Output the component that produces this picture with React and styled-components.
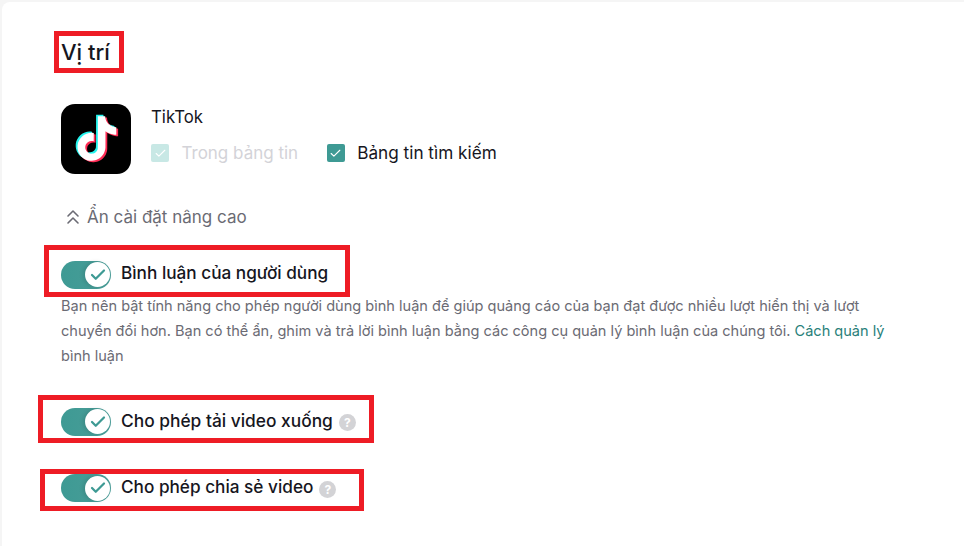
import React from 'react';
import styled, { createGlobalStyle } from 'styled-components';
import { Check, ChevronsUp } from 'lucide-react';

const Global = createGlobalStyle`
  html, body {
    margin: 0;
    background: #f5f5f5;
  }
  body {
    font-family: Inter, "Noto Sans", sans-serif;
    color: #16161e;
  }
`;

const Page = styled.div`
  width: 964px;
  height: 546px;
  box-sizing: border-box;
  padding: 2px 0 0 2px;
  overflow: hidden;
`;
const Card = styled.div`
  height: 544px;
  box-sizing: border-box;
  background: #fff;
  border-radius: 8px 0 0 0;
  padding-top: 29px;
`;
const Marked = styled.div`
  display: flex;
  align-items: center;
  box-sizing: border-box;
  border: 5px solid #ee1c25;
  margin: ${p => p.$top || 0}px 0 0 ${p => p.$left}px;
  width: ${p => p.$width}px;
  height: ${p => p.$height}px;
  padding-left: ${p => 54 - p.$left}px;
  padding-top: ${p => p.$shift || 0}px;
  padding-bottom: ${p => p.$lift || 0}px;
`;
const Title = styled.h2`
  margin: 0;
  font-size: 22px;
  font-weight: 500;
  line-height: 28px;
`;
const Platform = styled.div`
  display: flex;
  margin: 31px 0 0 59px;
`;
const Logo = styled.svg`
  display: block;
  width: 70px;
  height: 70px;
`;
const PlatformBody = styled.div`
  margin-left: 20px;
`;
const PlatformName = styled.div`
  font-size: 16.8px;
  line-height: 24px;
  margin-top: 1px;
`;
const Options = styled.div`
  display: flex;
  margin-top: 12px;
  gap: 28.5px;
`;
const Option = styled.label`
  display: flex;
  align-items: center;
  gap: 12.5px;
  font-size: 17.2px;
  line-height: 24px;
  color: ${p => (p.$disabled ? '#d3d3d8' : '#16161e')};
`;
const DisabledText = styled.span`
  font-size: 17px;
`;
const Box = styled.span`
  display: flex;
  align-items: center;
  justify-content: center;
  width: 18px;
  height: 18px;
  border-radius: 2px;
  background: ${p => (p.$disabled ? '#c8e8e5' : '#3e9a94')};
  color: #fff;
`;
const Advanced = styled.div`
  display: flex;
  align-items: center;
  gap: 2px;
  margin: 31px 0 0 59px;
  font-size: 17px;
  line-height: 24px;
  color: #6b6b74;
`;
const Switch = styled.span`
  display: flex;
  flex: none;
  justify-content: flex-end;
  align-items: center;
  width: 50px;
  height: 28px;
  padding-right: 1px;
  box-sizing: border-box;
  border-radius: 14px;
  background: linear-gradient(90deg, #3e9a94, #4a9d98);
`;
const Knob = styled.span`
  display: flex;
  align-items: center;
  justify-content: center;
  width: 25px;
  height: 25px;
  border-radius: 50%;
  background: #fff;
  box-shadow: -2px 0 4px rgba(0, 0, 0, 0.12);
  color: #3e9a94;
`;
const Label = styled.span`
  margin: 0 0 ${p => p.$rise || 2}px 10px;
  font-size: ${p => p.$size || 17.2}px;
  font-weight: 500;
  line-height: 24px;
`;
const Help = styled.span`
  display: flex;
  align-items: center;
  justify-content: center;
  width: 17px;
  height: 17px;
  margin: 2px 0 0 6px;
  border-radius: 50%;
  background: #d3d3d6;
  color: #fff;
  font-size: 12px;
  font-weight: 700;
`;
const Note = styled.p`
  width: 830px;
  margin: -3px 0 0 59px;
  font-size: 14.55px;
  line-height: 25px;
  color: #6b6b74;
`;
const NoteLink = styled.a`
  color: #2a7f7a;
`;

const notePath = 'M12.525.02c1.31-.02 2.61-.01 3.91-.02.08 1.53.63 3.09 1.75 4.17 1.12 1.11 2.7 1.62 4.24 1.79v4.03c-1.44-.05-2.89-.35-4.2-.97-.57-.26-1.1-.59-1.62-.93-.01 2.92.01 5.84-.02 8.75-.08 1.4-.54 2.79-1.35 3.94-1.31 1.92-3.58 3.17-5.91 3.21-1.43.08-2.86-.31-4.08-1.03-2.02-1.19-3.44-3.37-3.65-5.71-.02-.5-.03-1-.01-1.49.18-1.9 1.12-3.72 2.58-4.96 1.66-1.44 3.98-2.13 6.15-1.72.02 1.48-.04 2.96-.04 4.44-.99-.32-2.15-.23-3.02.37-.63.41-1.11 1.04-1.36 1.75-.21.51-.15 1.07-.14 1.61.24 1.64 1.82 3.02 3.5 2.87 1.12-.01 2.19-.66 2.77-1.61.19-.33.4-.67.41-1.06.1-1.79.06-3.57.07-5.36.01-4.03-.01-8.05.02-12.07z';

function TikTokLogo() {
  return (
    <Logo viewBox="0 0 70 70">
      <rect width="70" height="70" rx="14" fill="#000" />
      <path d={notePath} fill="#25f4ee" transform="translate(11.8 10.8) scale(1.86)" />
      <path d={notePath} fill="#fe2c55" transform="translate(15.4 13.6) scale(1.86)" />
      <path d={notePath} fill="#fff" transform="translate(13.6 12.2) scale(1.86)" />
    </Logo>
  );
}

function ToggleRow({ left, width, height, top, shift, lift, size, rise, help, children }) {
  return (
    <Marked $left={left} $width={width} $height={height} $top={top} $shift={shift} $lift={lift}>
      <Switch>
        <Knob><Check size={18} strokeWidth={3} /></Knob>
      </Switch>
      <Label $size={size} $rise={rise}>{children}</Label>
      {help && <Help>?</Help>}
    </Marked>
  );
}

export default function App() {
  return (
    <Page>
      <Global />
      <Card>
        <Marked $left={52} $width={70} $height={42}>
          <Title>Vị trí</Title>
        </Marked>
        <Platform>
          <TikTokLogo />
          <PlatformBody>
            <PlatformName>TikTok</PlatformName>
            <Options>
              <Option $disabled>
                <Box $disabled><Check size={13} strokeWidth={2} /></Box>
                <DisabledText>Trong bảng tin</DisabledText>
              </Option>
              <Option>
                <Box><Check size={13} strokeWidth={2} /></Box>
                Bảng tin tìm kiếm
              </Option>
            </Options>
          </PlatformBody>
        </Platform>
        <Advanced>
          <ChevronsUp size={24} strokeWidth={1.6} />
          Ẩn cài đặt nâng cao
        </Advanced>
        <ToggleRow left={42} width={306} height={52} top={16} shift={7} rise={4}>Bình luận của người dùng</ToggleRow>
        <Note>
          Bạn nên bật tính năng cho phép người dùng bình luận để giúp quảng cáo của bạn đạt được nhiều lượt hiển thị và lượt chuyển đổi hơn. Bạn có thể ẩn, ghim và trả lời bình luận bằng các công cụ quản lý bình luận của chúng tôi. <NoteLink>Cách quản lý</NoteLink> bình luận
        </Note>
        <ToggleRow left={36} width={336} height={48} top={26} shift={5} size={17.35} help>Cho phép tải video xuống</ToggleRow>
        <ToggleRow left={38} width={324} height={42} top={26} lift={4} help>Cho phép chia sẻ video</ToggleRow>
      </Card>
    </Page>
  );
}
